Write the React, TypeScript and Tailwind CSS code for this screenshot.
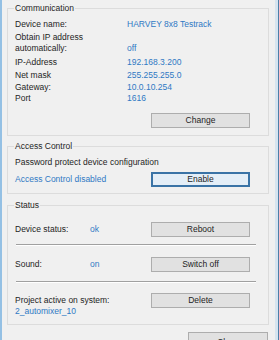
import { JSX, ReactNode } from "react";

const GroupBox = ({ title, className, children }: { title: string; className?: string; children: ReactNode }): JSX.Element => (
  <div className={`border border-[#dcdcdc] ${className ?? ""}`}>
    <div className="-mt-[6px] ml-[6px] w-fit bg-[#f0f0f0] px-[1px] leading-[11px]">{title}</div>
    {children}
  </div>
);

const Button = ({ label, focused }: { label: string; focused?: boolean }): JSX.Element => (
  <div
    className={`w-[99px] h-[15px] flex items-center justify-center leading-[11px] ${
      focused ? "border-2 border-[#3a73a6] bg-[#e4eef7]" : "border border-[#adadad] bg-[#e1e1e1]"
    }`}
  >
    {label}
  </div>
);

const Separator = (): JSX.Element => (
  <div className="ml-[8px] w-[240px] border-t border-[#a0a0a0] border-b border-b-white" />
);

const commRows = [
  { label: "IP-Address", value: "192.168.3.200", mt: "mt-[3px]" },
  { label: "Net mask", value: "255.255.255.0", mt: "mt-[2px]" },
  { label: "Gateway:", value: "10.0.10.254", mt: "mt-[1px]" },
  { label: "Port", value: "1616", mt: "mt-0" },
];

export default function App(): JSX.Element {
  return (
    <div className="w-[279px] h-[340px] overflow-hidden bg-[#f0f0f0] flex font-['Liberation_Sans',Arial,sans-serif] text-[8.5px] text-[#1e1e1e]">
      <div className="w-[2px] bg-[#94c0e4]" />

      <div className="w-[273px] pl-[5px] pt-[8px]">
        {/* Communication */}
        <GroupBox title="Communication" className="w-[262px] pb-[7px]">
          <div className="mt-[5px] pl-[7px] flex leading-[11px]">
            <span className="w-[112px]">Device name:</span>
            <span className="text-[#2f79c4]">HARVEY 8x8 Testrack</span>
          </div>
          <div className="mt-[2px] pl-[7px] flex leading-[11px]">
            <span className="w-[112px]">
              Obtain IP address
              <br />
              automatically:
            </span>
            <span className="self-end text-[#2f79c4]">off</span>
          </div>
          {commRows.map((row) => (
            <div key={row.label} className={`${row.mt} pl-[7px] flex leading-[11px]`}>
              <span className="w-[112px]">{row.label}</span>
              <span className="text-[#2f79c4]">{row.value}</span>
            </div>
          ))}
          <div className="mt-[9px] ml-[143px]">
            <Button label="Change" />
          </div>
        </GroupBox>

        {/* Access Control */}
        <GroupBox title="Access Control" className="mt-[10px] w-[262px] pb-[6px]">
          <div className="mt-[5px] pl-[7px] leading-[11px]">Password protect device configuration</div>
          <div className="mt-[4px] flex items-center">
            <span className="w-[143px] pl-[7px] leading-[11px] text-[#2f79c4]">Access Control disabled</span>
            <Button label="Enable" focused />
          </div>
        </GroupBox>

        {/* Status */}
        <GroupBox title="Status" className="mt-[11px] w-[262px] pb-[7px]">
          <div className="mt-[11px] flex items-center">
            <div className="w-[143px] pl-[7px] flex leading-[11px]">
              <span className="w-[75px]">Device status:</span>
              <span className="text-[#2f79c4]">ok</span>
            </div>
            <Button label="Reboot" />
          </div>
          <div className="mt-[7px]">
            <Separator />
          </div>
          <div className="mt-[11px] flex items-center">
            <div className="w-[143px] pl-[7px] flex leading-[11px]">
              <span className="w-[75px]">Sound:</span>
              <span className="text-[#2f79c4]">on</span>
            </div>
            <Button label="Switch off" />
          </div>
          <div className="mt-[9px]">
            <Separator />
          </div>
          <div className="mt-[10px] flex items-start">
            <div className="w-[143px] pl-[7px] pt-[2px] leading-[11px]">
              <div>Project active on system:</div>
              <div className="text-[#2f79c4]">2_automixer_10</div>
            </div>
            <Button label="Delete" />
          </div>
        </GroupBox>

        <div className="mt-[7px] ml-[181px] w-[80px] h-[20px] border border-[#adadad] bg-[#e1e1e1] flex justify-center pt-[4px] leading-[11px]">
          Close
        </div>
      </div>

      <div className="w-[3px] bg-[#d6e4ef]" />
      <div className="w-[1px] bg-[#4e7ea7]" />
    </div>
  );
}
